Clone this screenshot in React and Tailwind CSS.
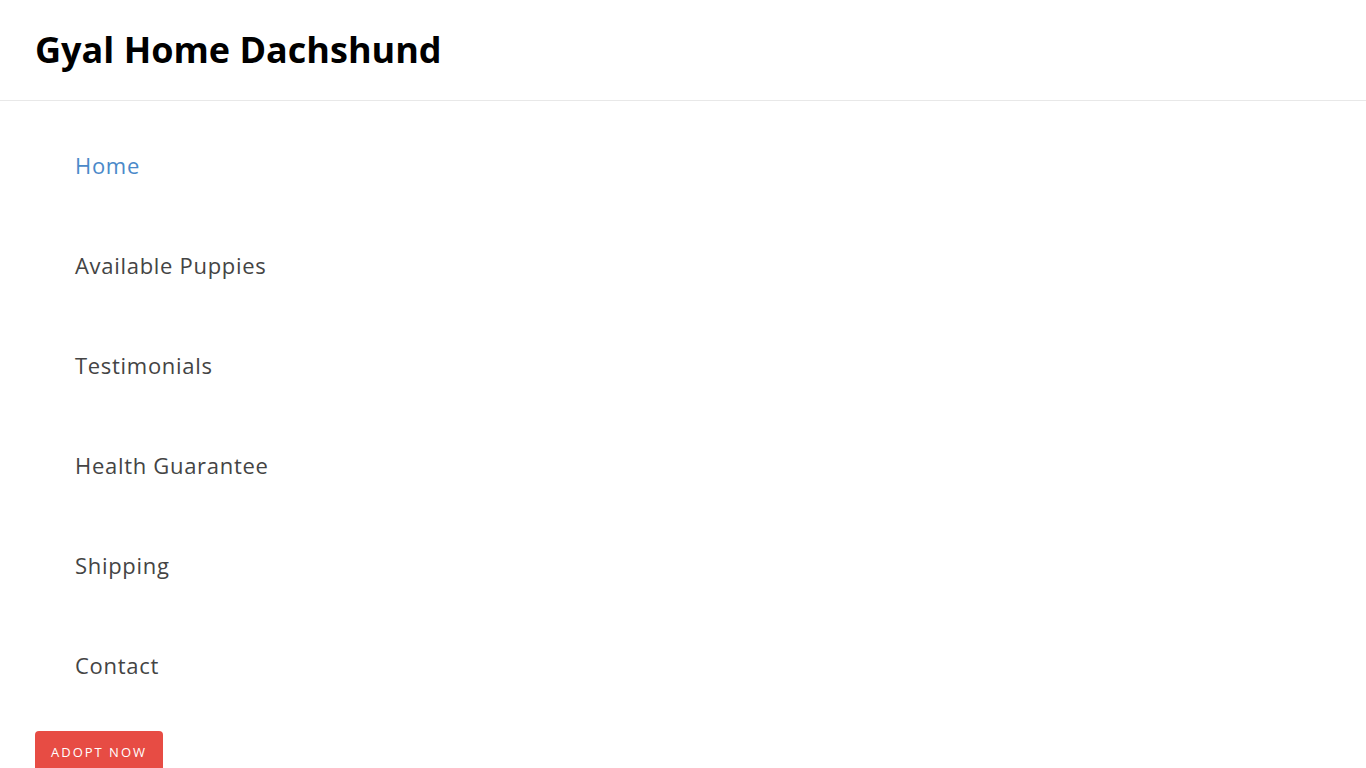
export default function App() {
  const links = ['Home', 'Available Puppies', 'Testimonials', 'Health Guarantee', 'Shipping', 'Contact'];
  return (
    <div className="min-h-screen bg-white font-['Open_Sans',sans-serif]">
      <header className="h-[101px] border-b border-[#e8e8e8] flex items-center px-[35px]">
        <h1 className="text-[36px] font-bold text-black leading-none">Gyal Home Dachshund</h1>
      </header>
      <nav className="flex flex-col px-[75px] pt-[14px]">
        {links.map((l, i) => (
          <a
            key={l}
            href="#"
            className={`h-[100px] flex items-center text-[22px] tracking-[0.7px] leading-none ${i === 0 ? 'text-[#4a89c9]' : 'text-[#444444]'}`}
          >
            {l}
          </a>
        ))}
      </nav>
      <div className="px-[35px] pt-[16px]">
        <button className="bg-[#e74c44] text-white text-[13px] tracking-[2px] rounded-[4px] w-[128px] h-[44px] uppercase">
          Adopt Now
        </button>
      </div>
    </div>
  );
}
